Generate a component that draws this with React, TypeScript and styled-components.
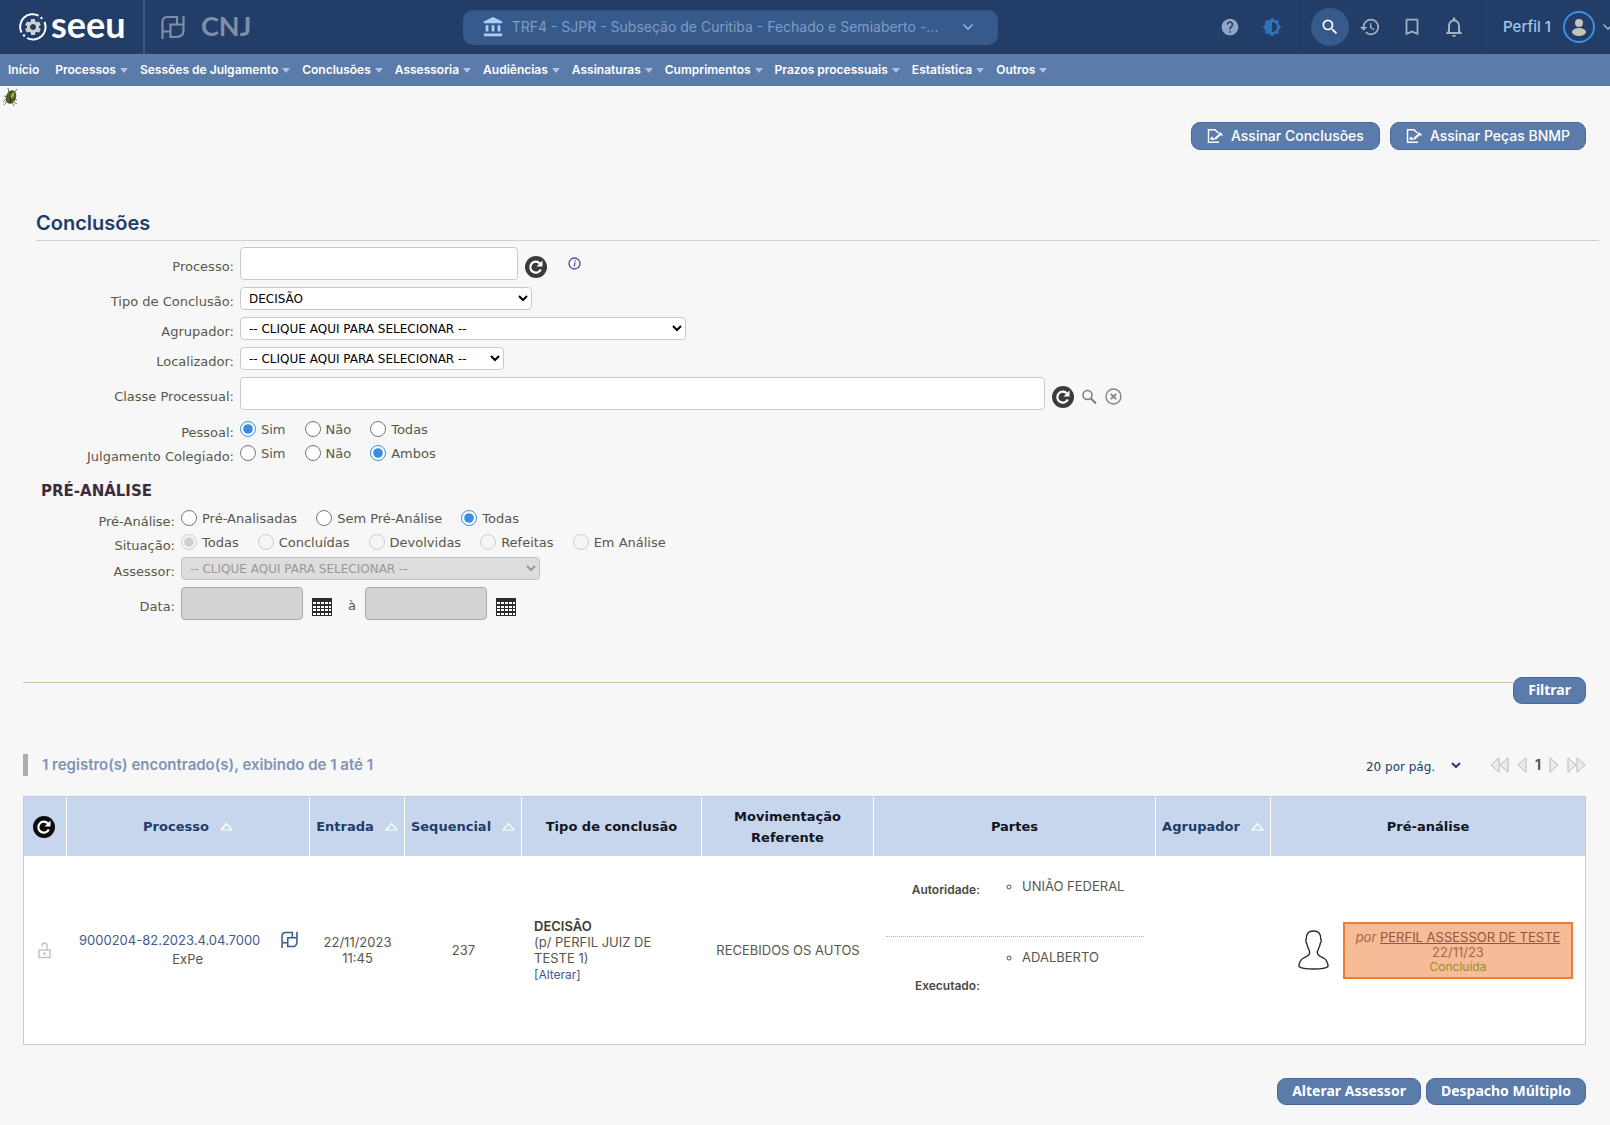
import React from "react";
import styled, { createGlobalStyle } from "styled-components";
import {
  MdAccountBalance,
  MdBookmarkBorder,
  MdBrightness6,
  MdHelp,
  MdHistory,
  MdNotificationsNone,
  MdSearch,
  MdSettings,
} from "react-icons/md";

const sans = `Inter, "Liberation Sans", sans-serif`;
const verdana = `"DejaVu Sans", sans-serif`;
const button = `"Noto Sans", sans-serif`;

const GlobalStyle = createGlobalStyle`
  * { box-sizing: border-box; }
  body {
    margin: 0;
    background: #f7f7f7;
    color: #57574b;
    font: 13px/16px ${sans};
  }
  button, input, select { font: inherit; color: inherit; }
  svg { display: block; flex: none; }
`;

/* ---------- top bar ---------- */

const TopBar = styled.header`
  display: flex;
  align-items: center;
  justify-content: space-between;
  height: 54px;
  overflow: hidden;
  background: #223d67;
`;

const Brand = styled.div`
  display: flex;
  align-items: center;
  height: 100%;
`;

const BrandLink = styled.a`
  display: flex;
  align-items: center;
  gap: 3px;
  width: 145px;
  height: 100%;
  padding-left: 18px;
  border-right: 2px solid #3f5985;
  color: #fff;
  text-decoration: none;
`;

const BrandName = styled.span`
  font: 700 36px/36px Lato, sans-serif;
  padding-bottom: 6px;
`;

const Partner = styled.div`
  display: flex;
  align-items: center;
  gap: 16px;
  padding: 0 10px 0 16px;
  color: #7f8fa9;
`;

const PartnerName = styled.span`
  font: 700 27px/32px Lato, sans-serif;
  padding-bottom: 2px;
`;

const UnitPicker = styled.button`
  display: flex;
  align-items: center;
  width: 535px;
  height: 35px;
  padding: 0 24px 0 19px;
  border: 0;
  border-radius: 10px;
  background: #375a8c;
  color: #7f9cc4;
  font-size: 14px;
  text-align: left;
`;

const UnitName = styled.span`
  flex: 1;
  min-width: 0;
  padding: 0 8px;
  overflow: hidden;
  text-overflow: ellipsis;
  white-space: nowrap;
`;

const Tools = styled.div`
  display: flex;
  align-items: center;
  height: 100%;
  margin-right: -4px;
`;

const ToolGroup = styled.div`
  display: flex;
  align-items: center;
  height: 100%;
  padding: 0 7px 0 10px;
  border-right: 1px solid #1f385f;
`;

const Tool = styled.button<{ $tint?: string }>`
  display: grid;
  place-items: center;
  width: 42px;
  height: 38px;
  padding: 0;
  border: 0;
  background: none;
  color: ${(p) => p.$tint ?? "#a3afc2"};
`;

const SearchTool = styled(Tool)`
  width: 38px;
  border-radius: 50%;
  background: #375a8c;
  color: #fff;
`;

const Profile = styled.button`
  display: flex;
  align-items: center;
  gap: 6px;
  padding: 0 0 0 20px;
  border: 0;
  background: none;
  color: #a3c4ee;
  font-size: 15px;
  font-weight: 500;
`;

const ProfileName = styled.span`
  padding-right: 5px;
`;

/* ---------- menu ---------- */

const Menu = styled.nav`
  display: flex;
  align-items: center;
  gap: 12px;
  height: 32px;
  padding: 0 8px;
  background: #5b7bab;
`;

const MenuItem = styled.a`
  display: flex;
  align-items: center;
  gap: 4px;
  color: #fff;
  font-size: 12px;
  font-weight: 600;
  text-decoration: none;
  white-space: nowrap;
  &:first-child { padding-right: 4px; }
`;

const Caret = styled.span`
  border: 4px solid transparent;
  border-top: 5px solid #b3c2d9;
  border-bottom: 0;
`;

/* ---------- page ---------- */

const Main = styled.main`
  padding: 0 24px 20px 23px;
`;

const DebugBar = styled.div`
  height: 36px;
  padding: 1px 2px;
`;

const Actions = styled.div<{ $gap: number }>`
  display: flex;
  justify-content: flex-end;
  gap: ${(p) => p.$gap}px;
`;

const SignButton = styled.button`
  display: flex;
  align-items: center;
  gap: 8px;
  height: 28px;
  padding: 0 15px;
  border: 1px solid #47689b;
  border-radius: 9px;
  background: #5b7bab;
  color: #fff;
  font-size: 14px;
  font-weight: 500;
`;

const PillButton = styled.button`
  height: 27px;
  padding: 0 14px 2px;
  border: 1px solid #47689b;
  border-radius: 9px;
  background: #5b7bab;
  color: #fff;
  font: 700 14px/20px ${button};
`;

const Title = styled.h1`
  margin: 60px -13px 6px 13px;
  padding-bottom: 4px;
  border-bottom: 1px solid #cfcfcf;
  color: #1f3d6b;
  font-size: 20px;
  font-weight: 600;
  line-height: 26px;
`;

const Form = styled.form`
  font: 13px/16px ${verdana};
`;

const Fields = styled.div<{ $label: number }>`
  display: grid;
  grid-template-columns: ${(p) => p.$label}px 1fr;
  column-gap: 6px;
  & + & { margin-top: 3px; }
`;

const Label = styled.label`
  align-self: center;
  padding-top: 7px;
  text-align: right;
`;

const Legend = styled(Label).attrs({ as: "span" })``;

const Cell = styled.div`
  display: flex;
  align-items: center;
  gap: 7px;
  padding-bottom: 7px;
`;

const LabelCell = styled.div`
  display: flex;
  justify-content: flex-end;
  padding-bottom: 7px;
`;

const TextBox = styled.input<{ $width: number }>`
  width: ${(p) => p.$width}px;
  height: 33px;
  padding: 0 8px;
  border: 1px solid #c9c9c9;
  border-radius: 4px;
  background: #fff;
  &:disabled {
    border-color: #a9a9a9;
    background: #d3d3d3;
  }
`;

const Select = styled.select<{ $width: number }>`
  width: ${(p) => p.$width}px;
  height: 23px;
  padding: 0 4px;
  border: 1px solid #c9c9c9;
  border-radius: 4px;
  background-color: #fff;
  color: #000;
  font-size: 12px;
  &:disabled {
    border-color: #a9a9a9;
    background-color: #d3d3d3;
    color: #707070;
  }
`;

const IconButton = styled.button`
  display: grid;
  place-items: center;
  padding: 0;
  border: 0;
  background: none;
  color: inherit;
`;

const DateButton = styled(IconButton)`
  padding-left: 2px;
`;

const IconRow = styled.span`
  display: flex;
  align-items: center;
  gap: 7px;
  padding-top: 6px;
`;

const InfoLink = styled.a`
  padding-left: 14px;
  color: #4b4ba0;
`;

const Options = styled.div`
  display: flex;
  align-items: center;
  gap: 19px;
  height: 24px;
`;

const Option = styled.label`
  display: flex;
  align-items: center;
  gap: 5px;
`;

const OptionText = styled.span`
  padding-top: 2px;
`;

const Radio = styled.input`
  width: 16px;
  height: 16px;
  margin: 0;
  accent-color: #3b8de0;
`;

const Subtitle = styled.h2`
  margin: 16px 0 5px 18px;
  color: #3b2d3b;
  font: 700 15px/20px ${verdana};
`;

const Until = styled.label`
  padding: 4px 2px 0 9px;
`;

const Submit = styled.div`
  display: flex;
  align-items: flex-start;
  margin-top: 50px;
`;

const Rule = styled.hr`
  flex: 1;
  margin: 5px 0 0;
  border: 0;
  border-top: 1px solid #c9c9a3;
`;

const ListBar = styled.div`
  display: flex;
  align-items: center;
  justify-content: space-between;
  margin: 50px 0 20px;
`;

const Count = styled.p`
  margin: 0;
  padding-left: 14px;
  border-left: 5px solid #adadad;
  color: #7f94b5;
  font-size: 15px;
  font-weight: 600;
  line-height: 22px;
`;

const Pager = styled.div`
  display: flex;
  align-items: center;
  gap: 8px;
`;

const PageSize = styled.select`
  width: 102px;
  height: 22px;
  padding-top: 3px;
  margin-right: 18px;
  border: 0;
  background: none;
  color: #223d67;
  font: 12px/16px ${verdana};
`;

const PageNumber = styled.strong`
  font-size: 14px;
`;

/* ---------- table ---------- */

const Table = styled.table`
  width: 100%;
  border: 1px solid #c9c6e2;
  border-collapse: separate;
  border-spacing: 0;
  table-layout: fixed;
  background: #fff;
  margin-bottom: 33px;
`;

const Col = styled.col<{ $width?: number }>`
  width: ${(p) => (p.$width ? `${p.$width}px` : "auto")};
`;

const Th = styled.th`
  height: 59px;
  padding: 0;
  border-right: 1px solid #fff;
  background: #c8d6ed;
  color: #10151f;
  font: 700 13px/21px ${verdana};
  &:last-child { border-right: 0; }
`;

const SortLink = styled.a`
  display: flex;
  align-items: center;
  justify-content: center;
  gap: 11px;
  color: #1f3d6b;
  text-decoration: none;
`;

const Td = styled.td<{ $left?: boolean }>`
  height: 188px;
  padding: 0 12px;
  text-align: ${(p) => (p.$left ? "left" : "center")};
`;

const Centered = styled.div`
  display: flex;
  align-items: center;
  justify-content: center;
  padding-right: 2px;
`;

const Case = styled.div`
  display: flex;
  align-items: flex-start;
  justify-content: space-between;
  line-height: 19px;
`;

const Link = styled.a<{ $small?: boolean }>`
  color: #3f5c8c;
  font-size: ${(p) => (p.$small ? 12 : 13)}px;
  text-decoration: none;
`;

const CaseKind = styled.div`
  padding-left: 36px;
`;

const Strong = styled.strong`
  color: #3b3b30;
  font-weight: 600;
`;

const Party = styled.div<{ $height: number; $below?: number }>`
  display: grid;
  grid-template-columns: 94px 1fr;
  align-items: center;
  height: ${(p) => p.$height}px;
  padding-bottom: ${(p) => p.$below ?? 0}px;
  & + & { border-top: 1px dotted #b5b5b5; }
`;

const Role = styled.strong`
  color: #4a4a3f;
  font-size: 12px;
  font-weight: 600;
  text-align: right;
`;

const Names = styled.ul`
  align-self: start;
  margin: 12px 0;
  padding-left: 42px;
  list-style: circle;
  text-align: left;
`;

const Review = styled.div`
  display: flex;
  align-items: center;
  justify-content: space-between;
  padding-left: 15px;
`;

const ReviewNote = styled.div`
  width: 230px;
  height: 57px;
  padding: 6px 0;
  border: 2px solid #ef7d31;
  background: #f6bb97;
  color: #a3694a;
  line-height: 15px;
`;

const Reviewer = styled.a`
  color: #94573c;
`;

const Done = styled.div`
  color: #92902b;
  font-size: 12px;
  line-height: 14px;
`;

/* ---------- drawings ---------- */

const SeeuMark = () => (
  <svg width="30" height="30" viewBox="0 0 30 30" fill="none" stroke="#fff" strokeWidth="2">
    <path d="M3.500 20.500A12.500 12.500 0 0 1 20.500 3.700M26.500 10A12.500 12.500 0 0 1 9 26" />
    <circle cx="23.500" cy="6" r="1.200" fill="#fff" stroke="none" />
    <circle cx="6" cy="23.500" r="1.300" fill="#fff" stroke="none" />
    <MdSettings x="5" y="5" size={20} color="#cfd0d3" stroke="none" strokeWidth="0" />
  </svg>
);

const PdpjMark = ({ size }: { size: number }) => (
  <svg width={size} height={size} viewBox="0 0 24 24" fill="none" stroke="currentColor" strokeWidth="2.200">
    <path d="M1.500 24V7q0-5 5-5H16v7.500" />
    <path d="M22.500 1v14q0 7-7 7h-6V9.500h13M1.500 16.500h8" />
  </svg>
);

const Chevron = () => (
  <svg width="12" height="8" viewBox="0 0 12 8" fill="none" stroke="#a3bde0" strokeWidth="1.300">
    <path d="M1.500 1.500 6 6l4.500-4.500" />
  </svg>
);

const Avatar = () => (
  <svg width="34" height="34" viewBox="0 0 34 34">
    <circle cx="17" cy="17" r="15" fill="none" stroke="#3f8fe0" strokeWidth="2" />
    <circle cx="17" cy="13" r="4" fill="#c9c3bf" />
    <ellipse cx="17" cy="22" rx="7" ry="4" fill="#c9c3bf" />
  </svg>
);

const Beetle = () => (
  <svg width="17" height="20" viewBox="0 0 17 20">
    <path d="m6 1 1 5m8-4-3 4M1 15l4-4m-3-2 4 1m9 3-4-1m1 3 3 2M10 15l2 4M5 14l-3 4" stroke="#6e6e5e" fill="none" />
    <ellipse cx="9" cy="10" rx="5" ry="7" fill="#4d5f1f" transform="rotate(20 9 10)" />
    <path d="M10 4 8 16" stroke="#1f2609" />
    <ellipse cx="10.500" cy="8" rx="1.500" ry="3" fill="#9aa860" transform="rotate(20 10 8)" />
  </svg>
);

const SignIcon = () => (
  <svg width="16" height="16" viewBox="0 0 16 16" fill="none" stroke="#fff" strokeWidth="1.400">
    <path d="M12 14.300H1.500V1.700H8l3.500 3.500" />
    <path d="m3.500 11.500 1.500-2 1 2 1.500-1" />
    <path d="m8 11 6-5.500" strokeWidth="2.200" />
    <path d="m12.500 4.500 3 3" />
  </svg>
);

const Reload = ({ color }: { color: string }) => (
  <svg width="22" height="22" viewBox="0 0 22 22">
    <circle cx="11" cy="11" r="11" fill={color} />
    <path d="M15 7.600A5.500 5.500 0 1 0 15.800 13.500" fill="none" stroke="#fff" strokeWidth="2.200" />
    <path d="M17.500 4.500v6h-6z" fill="#fff" />
  </svg>
);

const Info = () => (
  <svg width="13" height="13" viewBox="0 0 13 13" fill="none" stroke="currentColor">
    <circle cx="6.500" cy="6.500" r="5.500" strokeWidth="1.300" />
    <path d="M7 5.500 6.300 9.500M7.200 3.200v1.200" strokeWidth="1.300" />
  </svg>
);

const Lens = () => (
  <svg width="17" height="18" viewBox="0 0 17 18" fill="none" stroke="#7b7b7b" strokeWidth="1.500">
    <circle cx="6.500" cy="7" r="4.500" />
    <path d="m10 10.500 5 5" strokeWidth="2" />
  </svg>
);

const Clear = () => (
  <svg width="17" height="17" viewBox="0 0 17 17" fill="none" stroke="#858585" strokeWidth="1.400">
    <circle cx="8.500" cy="8.500" r="7.500" />
    <path d="m5.800 5.800 5.400 5.400m0-5.400-5.400 5.400" strokeWidth="1.800" />
  </svg>
);

const Padlock = () => (
  <svg width="13" height="17" viewBox="0 0 13 17" fill="none" stroke="#c3c3c3" strokeWidth="1.400">
    <path d="M1 8h11v7.500H1zM4 4.500Q4 1 6.500 1T9 4v4" />
    <circle cx="6.500" cy="11.700" r=".700" fill="#c3c3c3" />
  </svg>
);

const Calendar = () => (
  <svg width="20" height="18" viewBox="0 0 20 18">
    <path d="M0 0h20v18H0z" fill="#2b2b2b" />
    {[4, 8, 11, 15].map((y) =>
      [1, 5, 9, 13, 17].map((x) => <path key={`${x}-${y}`} d={`M${x} ${y}h${x === 17 ? 2 : 3}v2h-${x === 17 ? 2 : 3}z`} fill="#fff" />)
    )}
  </svg>
);

const SortMark = () => (
  <svg width="13" height="9" viewBox="0 0 13 9" fill="none" stroke="#fff" strokeWidth="1.200">
    <path d="M1 8 6.500 1.500 12 8z" />
  </svg>
);

const PageArrow = ({ back, twice }: { back?: boolean; twice?: boolean }) => (
  <svg width={twice ? 19 : 10} height="16" viewBox={`0 0 ${twice ? 19 : 10} 16`} fill="#ececec" stroke="#b9b9b9">
    <path d={back ? "M9 .800v14.400L1 8z" : "M1 .800v14.400L9 8z"} />
    {twice && <path d={back ? "M18 .800v14.400L10 8z" : "M10 .800v14.400L18 8z"} />}
  </svg>
);

const Person = () => (
  <svg width="31" height="40" viewBox="0 0 31 40" fill="#fff" stroke="#2b2b2b" strokeWidth="1.400">
    <path d="M15.500 1C10.500 1 8 3.500 8.300 9c-.8.800-.6 3 .4 4.300 1 5 3 7 3 9.200 0 3-3 4-6 5.500C2 30 1 32 1 36.500 3 38.500 9 39 15.500 39s12.500-.5 14.500-2.500c0-4.500-1-6.500-4.700-8.500-3-1.500-6-2.500-6-5.500 0-2.200 2-4.200 3-9.200 1-1.300 1.200-3.500.4-4.300C23 3.500 20.500 1 15.500 1z" />
  </svg>
);

/* ---------- content ---------- */

const menu = [
  "Processos",
  "Sessões de Julgamento",
  "Conclusões",
  "Assessoria",
  "Audiências",
  "Assinaturas",
  "Cumprimentos",
  "Prazos processuais",
  "Estatística",
  "Outros",
];

const placeholder = "-- CLIQUE AQUI PARA SELECIONAR --";

type RadiosProps = { name: string; label: string; options: string[]; value: string; disabled?: boolean };

const Radios = ({ name, label, options, value, disabled }: RadiosProps) => (
  <>
    <Legend id={`${name}-legend`}>{label}</Legend>
    <Options role="radiogroup" aria-labelledby={`${name}-legend`}>
      {options.map((option) => (
        <Option key={option}>
          <Radio type="radio" name={name} defaultChecked={option === value} disabled={disabled} />
          <OptionText>{option}</OptionText>
        </Option>
      ))}
    </Options>
  </>
);

const Field = ({ id, label, children }: { id: string; label: string; children: React.ReactNode }) => (
  <>
    <LabelCell>
      <Label htmlFor={id}>{label}</Label>
    </LabelCell>
    <Cell>{children}</Cell>
  </>
);

const Sortable = ({ children }: { children: string }) => (
  <Th>
    <SortLink href="#">
      {children}
      <SortMark />
    </SortLink>
  </Th>
);

export default function App() {
  return (
    <>
      <GlobalStyle />
      <TopBar>
        <Brand>
          <BrandLink href="#">
            <SeeuMark />
            <BrandName>seeu</BrandName>
          </BrandLink>
          <Partner>
            <PdpjMark size={24} />
            <PartnerName>CNJ</PartnerName>
          </Partner>
        </Brand>
        <UnitPicker type="button">
          <MdAccountBalance size={22} color="#a9cdf7" />
          <UnitName>TRF4 - SJPR - Subseção de Curitiba - Fechado e Semiaberto -...</UnitName>
          <Chevron />
        </UnitPicker>
        <Tools>
          <ToolGroup>
            <Tool type="button" aria-label="Ajuda" $tint="#8fa6c6"><MdHelp size={20} /></Tool>
            <Tool type="button" aria-label="Tema" $tint="#3173b8"><MdBrightness6 size={20} /></Tool>
          </ToolGroup>
          <ToolGroup>
            <SearchTool type="button" aria-label="Pesquisar"><MdSearch size={20} /></SearchTool>
            <Tool type="button" aria-label="Histórico"><MdHistory size={22} /></Tool>
            <Tool type="button" aria-label="Favoritos"><MdBookmarkBorder size={22} /></Tool>
            <Tool type="button" aria-label="Notificações"><MdNotificationsNone size={24} /></Tool>
          </ToolGroup>
          <Profile type="button">
            <ProfileName>Perfil 1</ProfileName>
            <Avatar />
            <Chevron />
          </Profile>
        </Tools>
      </TopBar>

      <Menu>
        <MenuItem href="#">Início</MenuItem>
        {menu.map((item) => (
          <MenuItem key={item} href="#">
            {item}
            <Caret />
          </MenuItem>
        ))}
      </Menu>

      <DebugBar>
        <Beetle />
      </DebugBar>

      <Main>
        <Actions $gap={10}>
          <SignButton type="button"><SignIcon />Assinar Conclusões</SignButton>
          <SignButton type="button"><SignIcon />Assinar Peças BNMP</SignButton>
        </Actions>

        <Title>Conclusões</Title>

        <Form onSubmit={(e) => e.preventDefault()}>
          <Fields $label={211}>
            <Field id="processo" label="Processo:">
              <TextBox id="processo" $width={278} />
              <IconRow>
                <IconButton type="button" aria-label="Limpar processo"><Reload color="#3b3b3b" /></IconButton>
              </IconRow>
              <InfoLink href="#" aria-label="Informação"><Info /></InfoLink>
            </Field>
            <Field id="tipo" label="Tipo de Conclusão:">
              <Select id="tipo" $width={292}><option>DECISÃO</option></Select>
            </Field>
            <Field id="agrupador" label="Agrupador:">
              <Select id="agrupador" $width={446}><option>{placeholder}</option></Select>
            </Field>
            <Field id="localizador" label="Localizador:">
              <Select id="localizador" $width={264}><option>{placeholder}</option></Select>
            </Field>
            <Field id="classe" label="Classe Processual:">
              <TextBox id="classe" $width={805} />
              <IconRow>
                <IconButton type="button" aria-label="Recarregar classe"><Reload color="#3b3b3b" /></IconButton>
                <IconButton type="button" aria-label="Buscar classe"><Lens /></IconButton>
                <IconButton type="button" aria-label="Limpar classe"><Clear /></IconButton>
              </IconRow>
            </Field>
            <Radios name="pessoal" label="Pessoal:" options={["Sim", "Não", "Todas"]} value="Sim" />
            <Radios name="colegiado" label="Julgamento Colegiado:" options={["Sim", "Não", "Ambos"]} value="Ambos" />
          </Fields>

          <Subtitle>PRÉ-ANÁLISE</Subtitle>

          <Fields $label={152}>
            <Radios name="preanalise" label="Pré-Análise:" options={["Pré-Analisadas", "Sem Pré-Análise", "Todas"]} value="Todas" />
            <Radios name="situacao" label="Situação:" options={["Todas", "Concluídas", "Devolvidas", "Refeitas", "Em Análise"]} value="Todas" disabled />
          </Fields>
          <Fields $label={152}>
            <Field id="assessor" label="Assessor:">
              <Select id="assessor" $width={359} disabled><option>{placeholder}</option></Select>
            </Field>
            <Field id="data-de" label="Data:">
              <TextBox id="data-de" $width={122} disabled />
              <IconRow>
                <DateButton type="button" aria-label="Escolher data inicial"><Calendar /></DateButton>
              </IconRow>
              <Until htmlFor="data-ate">à</Until>
              <TextBox id="data-ate" $width={122} disabled />
              <IconRow>
                <DateButton type="button" aria-label="Escolher data final"><Calendar /></DateButton>
              </IconRow>
            </Field>
          </Fields>

          <Submit>
            <Rule />
            <PillButton type="submit">Filtrar</PillButton>
          </Submit>
        </Form>

        <ListBar>
          <Count>1 registro(s) encontrado(s), exibindo de 1 até 1</Count>
          <Pager>
            <PageSize aria-label="Registros por página"><option>20 por pág.</option></PageSize>
            <IconButton type="button" aria-label="Primeira página"><PageArrow back twice /></IconButton>
            <IconButton type="button" aria-label="Página anterior"><PageArrow back /></IconButton>
            <PageNumber>1</PageNumber>
            <IconButton type="button" aria-label="Próxima página"><PageArrow /></IconButton>
            <IconButton type="button" aria-label="Última página"><PageArrow twice /></IconButton>
          </Pager>
        </ListBar>

        <Table>
          <colgroup>
            <Col $width={43} />
            <Col $width={243} />
            <Col $width={95} />
            <Col $width={117} />
            <Col $width={180} />
            <Col $width={172} />
            <Col $width={282} />
            <Col $width={115} />
            <Col />
          </colgroup>
          <thead>
            <tr>
              <Th>
                <Centered>
                  <IconButton type="button" aria-label="Inverter seleção"><Reload color="#0b0b0b" /></IconButton>
                </Centered>
              </Th>
              <Sortable>Processo</Sortable>
              <Sortable>Entrada</Sortable>
              <Sortable>Sequencial</Sortable>
              <Th>Tipo de conclusão</Th>
              <Th>Movimentação<br />Referente</Th>
              <Th>Partes</Th>
              <Sortable>Agrupador</Sortable>
              <Th>Pré-análise</Th>
            </tr>
          </thead>
          <tbody>
            <tr>
              <Td><Centered><Padlock /></Centered></Td>
              <Td>
                <Case>
                  <div>
                    <Link href="#">9000204-82.2023.4.04.7000</Link>
                    <CaseKind>ExPe</CaseKind>
                  </div>
                  <Link href="#" aria-label="Abrir no PDPJ"><PdpjMark size={17} /></Link>
                </Case>
              </Td>
              <Td>22/11/2023<br />11:45</Td>
              <Td>237</Td>
              <Td $left>
                <Strong>DECISÃO</Strong><br />
                (p/ PERFIL JUIZ DE TESTE 1)<br />
                <Link href="#" $small>[Alterar]</Link>
              </Td>
              <Td>RECEBIDOS OS AUTOS</Td>
              <Td>
                <Party $height={70} $below={22}>
                  <Role>Autoridade:</Role>
                  <Names><li>UNIÃO FEDERAL</li></Names>
                </Party>
                <Party $height={98}>
                  <Role>Executado:</Role>
                  <Names><li>ADALBERTO</li></Names>
                </Party>
              </Td>
              <Td />
              <Td>
                <Review>
                  <Person />
                  <ReviewNote>
                    <em>por</em> <Reviewer href="#">PERFIL ASSESSOR DE TESTE</Reviewer>
                    <div>22/11/23</div>
                    <Done>Concluída</Done>
                  </ReviewNote>
                </Review>
              </Td>
            </tr>
          </tbody>
        </Table>

        <Actions $gap={5}>
          <PillButton type="button">Alterar Assessor</PillButton>
          <PillButton type="button">Despacho Múltiplo</PillButton>
        </Actions>
      </Main>
    </>
  );
}
